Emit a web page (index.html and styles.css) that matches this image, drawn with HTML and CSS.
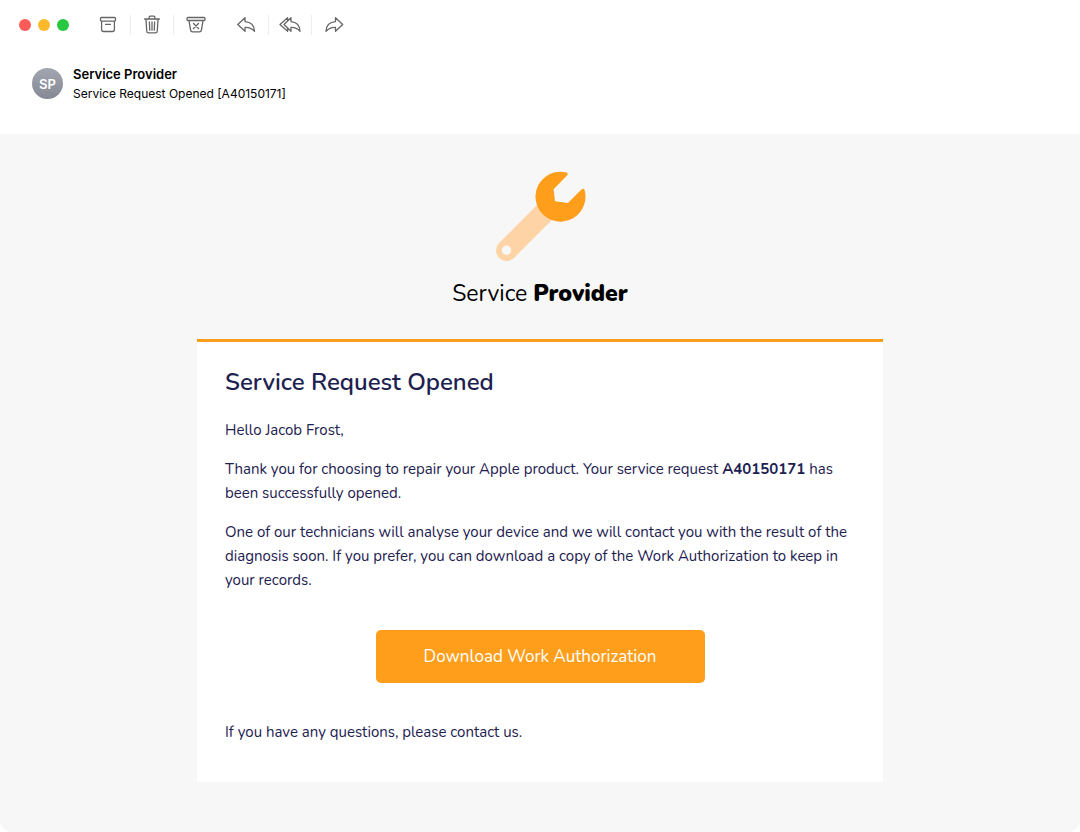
FILE: index.html
```html
<!DOCTYPE html>
<html lang="en">
<head>
    <meta charset="utf-8">
    <title>Service Request Opened</title>
    <meta name="viewport" content="width=device-width, initial-scale=1">
    <link rel="stylesheet" href="styles.css">
</head>
<body>
    <div class="window">
        <header class="mail-header">
            <div class="toolbar">
                <div class="lights">
                    <button class="light red" aria-label="Close"></button>
                    <button class="light yellow" aria-label="Minimize"></button>
                    <button class="light green" aria-label="Zoom"></button>
                </div>
                <div class="tools">
                    <button class="tool" aria-label="Archive">
                        <svg width="20" height="20" viewBox="0 0 20 20"><rect x="2.5" y="2.5" width="15" height="3.6" rx="1"/><path d="M3.6 6.300V14.500q0 2 2 2h8.800q2 0 2-2V6.300M7.500 9.300h5"/></svg>
                    </button>
                    <button class="tool split" aria-label="Delete">
                        <svg width="20" height="20" viewBox="0 0 20 20"><path d="M2.600 4h14.800M7.200 3.800V2.100q0-1 1-1h3.600q1 0 1 1v1.700M4 4.300l.7 11.700q.1 1.900 2 1.900h6.600q1.900 0 2-1.900L16 4.300M7.400 6.800l.3 8.400M10 6.800v8.400M12.600 6.800l-.3 8.400"/></svg>
                    </button>
                    <button class="tool" aria-label="Junk">
                        <svg width="20" height="20" viewBox="0 0 20 20"><rect x="1" y="2.500" width="18" height="3" rx="1"/><path d="M3 5.700l1.500 9.100q.3 2 2.200 2h6.600q1.900 0 2.200-2L17 5.700M7.500 8.500l5 5M12.500 8.500l-5 5"/></svg>
                    </button>
                </div>
                <div class="tools replies">
                    <button class="tool" aria-label="Reply">
                        <svg width="22" height="20" viewBox="0 0 22 20"><path d="M10 2.700L2.800 9.500l7.200 6.800v-3.900q5.500-.3 9.500 3.900-.3-9-9.500-9.700z"/></svg>
                    </button>
                    <button class="tool split" aria-label="Reply all">
                        <svg width="22" height="20" viewBox="0 0 22 20"><path d="M12 2.700L5 9.500l7 6.800v-3.900q5.500-.3 9 3.900-.3-9-9-9.700zM8.600 5.600V2.700L1 9.500l7.600 6.800v-2.900"/></svg>
                    </button>
                    <button class="tool" aria-label="Forward">
                        <svg width="22" height="20" viewBox="0 0 22 20"><path d="M12.500 2.700l7.200 6.800-7.200 6.800v-3.900Q7 12.100 3 16.300q.3-9 9.500-9.700z"/></svg>
                    </button>
                </div>
            </div>
            <div class="sender">
                <div class="avatar">SP</div>
                <div>
                    <div class="from">Service Provider</div>
                    <div class="subject">Service Request Opened [A40150171]</div>
                </div>
            </div>
        </header>
        <main class="mail-body">
            <div class="logo">
                <svg width="92" height="92" viewBox="0 0 92 92">
                    <path d="M12.500 80.500L49 44" stroke="#fed3a5" stroke-width="21" stroke-linecap="round"/>
                    <circle cx="12.500" cy="80.200" r="4.700" fill="#f7f7f7"/>
                    <path d="M73 5.500L59.600 19.200L61 31.200L74 33L87.200 19.700Q90 17.500 90.700 20.500A25 25 0 1 1 71.500 2.200Q75 2.800 73 5.500z" fill="#ff9e1b"/>
                </svg>
                <div class="brand">Service <b>Provider</b></div>
            </div>
            <article class="card">
                <h1>Service Request Opened</h1>
                <p>Hello Jacob Frost,</p>
                <p>Thank you for choosing to repair your Apple product. Your service request <b>A40150171</b> has been successfully opened.</p>
                <p>One of our technicians will analyse your device and we will contact you with the result of the diagnosis soon. If you prefer, you can download a copy of the Work Authorization to keep in your records.</p>
                <a class="download" href="#">Download Work Authorization</a>
                <p>If you have any questions, please contact us.</p>
            </article>
        </main>
    </div>
</body>
</html>
```
FILE: styles.css
```css
* {
    box-sizing: border-box;
}

body {
    margin: 0;
    background: #fff;
    color: #1d2150;
    font-family: Nunito, Lato, sans-serif;
    font-size: 15px;
    line-height: 24px;
}

.window {
    display: flex;
    flex-direction: column;
    min-height: 100vh;
    border-radius: 12px;
    overflow: hidden;
    background: #fff;
}

/* mail header */
.mail-header {
    padding: 10px 16px 31px;
    color: #000;
    font-family: Inter, sans-serif;
}

.toolbar {
    display: flex;
    align-items: center;
    height: 30px;
}

.lights {
    display: flex;
    gap: 7px;
    padding-left: 3px;
}

.light {
    width: 12px;
    height: 12px;
    padding: 0;
    border: 0;
    border-radius: 50%;
}

.red { background: #fc5b57; }
.yellow { background: #fdb92c; }
.green { background: #28c840; }

.tools {
    display: flex;
    margin-left: 17px;
}

.replies {
    margin-left: 6px;
}

.tool {
    display: flex;
    align-items: center;
    justify-content: center;
    width: 44px;
    height: 20px;
    padding: 0;
    border: 0;
    background: none;
}

.split {
    border: solid #ededed;
    border-width: 0 1px;
}

.tool svg {
    flex: none;
    fill: none;
    stroke: #666;
    stroke-width: 1.3;
    stroke-linejoin: round;
    stroke-linecap: round;
}

.sender {
    display: flex;
    align-items: center;
    gap: 10px;
    padding: 24px 0 0 16px;
}

.avatar {
    display: flex;
    align-items: center;
    justify-content: center;
    width: 31px;
    height: 31px;
    border-radius: 50%;
    background: linear-gradient(#a1a6b1, #858995);
    color: #fff;
    font-size: 13px;
    font-weight: 600;
}

.from {
    font-size: 13px;
    font-weight: 600;
    line-height: 20px;
}

.subject {
    font-size: 12px;
    line-height: 19px;
}

/* message */
.mail-body {
    flex: 1;
    padding: 36px 16px 50px;
    background: #f7f7f7;
}

.logo {
    display: flex;
    flex-direction: column;
    align-items: center;
    color: #000;
}

.logo svg {
    fill: none;
}

.brand {
    margin-top: 15px;
    font-size: 23px;
    line-height: 34px;
}

.brand b {
    font-weight: 900;
}

.card {
    max-width: 686px;
    margin: 28px auto 0;
    padding: 24px 28px 38px;
    border-top: 3px solid #ff9e1b;
    background: #fff;
}

h1 {
    margin: 0 0 20px;
    font-size: 24px;
    font-weight: 600;
    line-height: 32px;
}

p {
    margin: 0 0 15px;
}

.download {
    display: block;
    width: 329px;
    max-width: 100%;
    margin: 38px auto 37px;
    border-radius: 5px;
    background: #ff9e1b;
    color: #fff;
    font-size: 17px;
    line-height: 53px;
    text-align: center;
    text-decoration: none;
}

.card p:last-child {
    margin: 0;
}
```
